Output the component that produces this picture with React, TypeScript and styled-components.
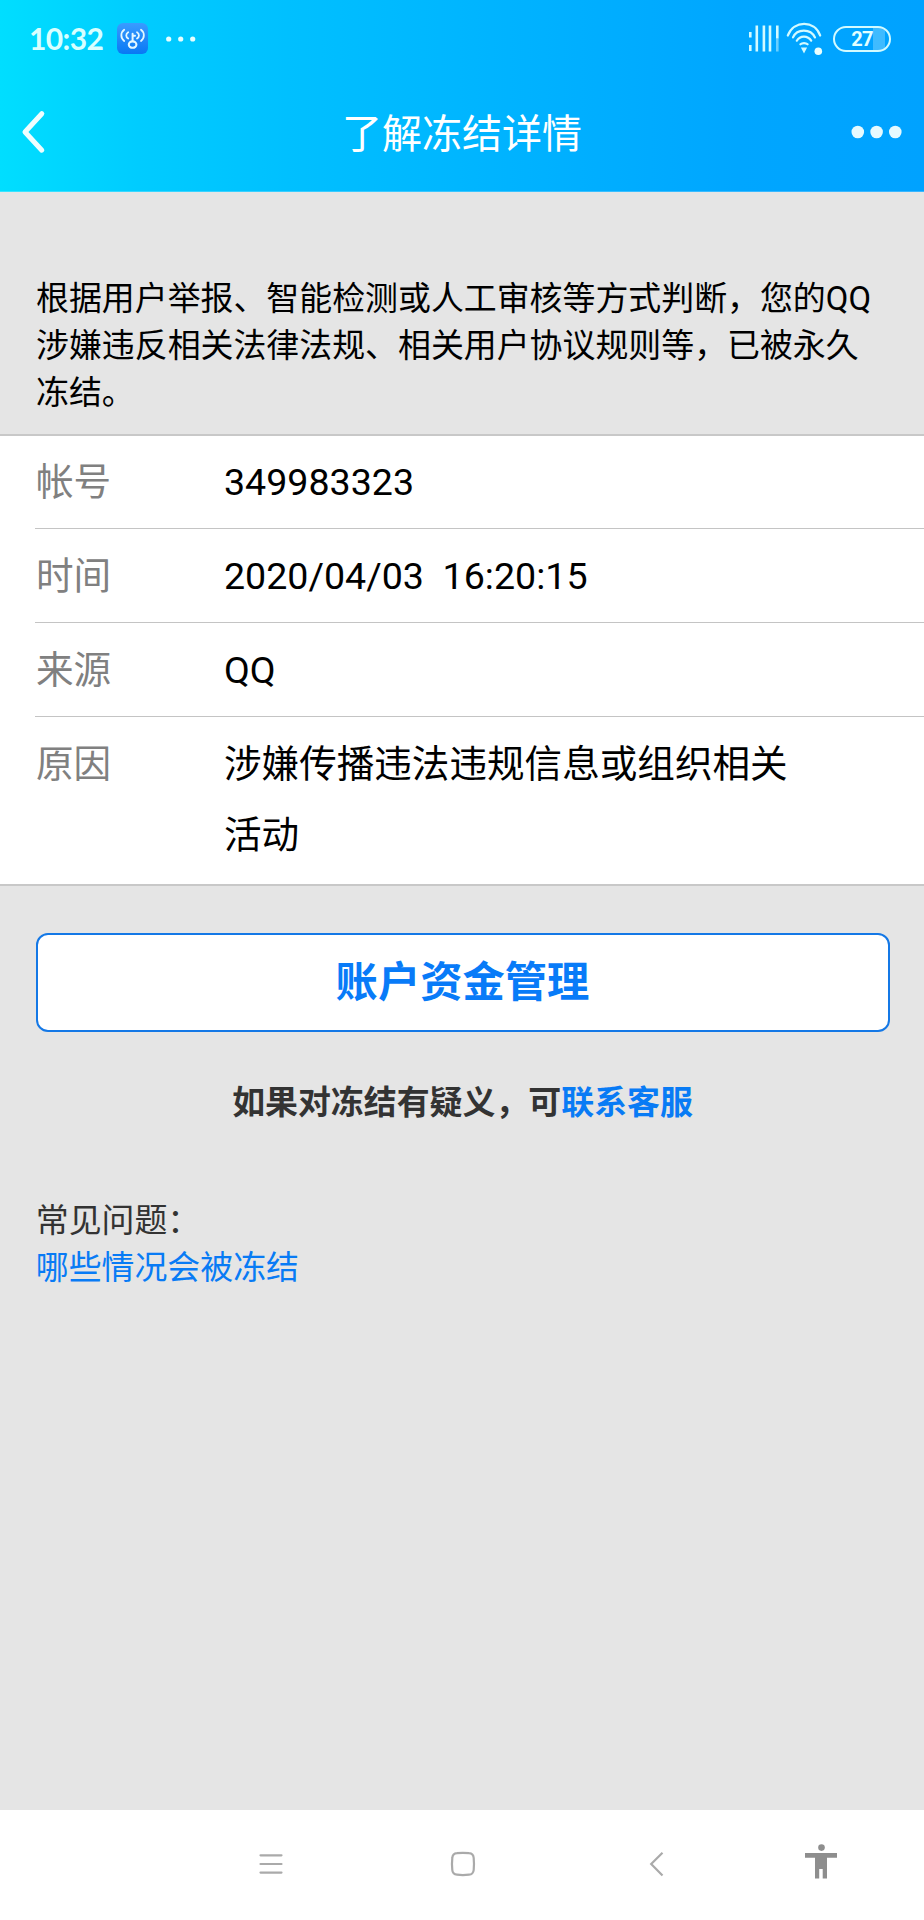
import React from "react";
import styled, { createGlobalStyle } from "styled-components";

const GlobalStyle = createGlobalStyle`
  * { box-sizing: border-box; }
  body {
    margin: 0;
    background: #e5e5e5;
    font-family: Roboto, "Noto Sans CJK SC", sans-serif;
  }
`;

const Screen = styled.div`
  width: 924px;
  height: 1920px;
  display: flex;
  flex-direction: column;
  background: #e5e5e5;
  overflow: hidden;
`;

const Header = styled.header`
  height: 192px;
  flex: none;
  border-bottom: 1px solid rgba(255, 255, 255, 0.22);
  background: linear-gradient(90deg, #00deff 0%, #00ccff 15%, #00c0ff 31%, #00b3ff 55%, #00a6ff 80%, #00a2ff 100%) border-box;
`;

const StatusBar = styled.div`
  height: 77px;
  display: flex;
  align-items: center;
  justify-content: space-between;
  padding: 0 33px 0 29px;
`;

const StatusGroup = styled.div`
  display: flex;
  align-items: center;
`;

const Clock = styled.span`
  width: 88px;
  padding-bottom: 2px;
  font-family: Lato, sans-serif;
  font-weight: 700;
  font-size: 30px;
  line-height: 36px;
  letter-spacing: -0.6px;
  color: #d8ffff;
  white-space: nowrap;
`;

const StatusDots = styled.svg`
  margin-left: 18px;
`;

const AppBar = styled.div`
  height: 114px;
  display: grid;
  grid-template-columns: 120px 1fr 120px;
  align-items: center;
`;

const IconButton = styled.button<{ $end?: boolean }>`
  border: 0;
  padding: ${(p) => (p.$end ? "0 22px 4px 0" : "0 0 4px 21px")};
  height: 110px;
  background: none;
  display: flex;
  align-items: center;
  justify-content: ${(p) => (p.$end ? "flex-end" : "flex-start")};
`;

const Title = styled.h1`
  margin: 0;
  padding-top: 1px;
  font-weight: 400;
  font-size: 40px;
  line-height: 60px;
  text-align: center;
  color: #fff;
`;

const Content = styled.main`
  flex: 1;
  display: flex;
  flex-direction: column;
`;

const Intro = styled.p`
  margin: 0;
  padding: 83px 34px 18px 36px;
  height: 242px;
  font-size: 32.92px;
  line-height: 47px;
  color: #000;
  white-space: nowrap;
`;

const Details = styled.dl`
  margin: 0;
  border-top: 2px solid #c8c8c8;
  border-bottom: 2px solid #c8c8c8;
  background: #fff;
  padding-left: 35.3px;
`;

const Row = styled.div<{ $first?: boolean; $last?: boolean }>`
  display: flex;
  height: ${(p) => (p.$last ? 167 : p.$first ? 93 : 94)}px;
  padding-top: ${(p) => (p.$first ? 11 : 12)}px;
  padding-left: 0.7px;
  border-bottom: ${(p) => (p.$last ? "none" : "1px solid #c4c4c4")};
  font-size: 37.6px;
  line-height: 70.5px;
`;

const Label = styled.dt`
  width: 188px;
  flex: none;
  color: #808080;
`;

const Value = styled.dd`
  margin: 0;
  width: 580px;
  color: #000;
  white-space: pre-wrap;
`;

const FundsButton = styled.button`
  margin: 47px 34.5px 0 35.5px;
  height: 99px;
  flex: none;
  padding: 1px 0 0;
  border: 2px solid #1478e6;
  border-radius: 12px;
  background: #fff;
  color: #087bf8;
  font-family: inherit;
  font-weight: 700;
  font-size: 42.3px;
  line-height: 60px;
`;

const Appeal = styled.p`
  margin: 47px 0 0;
  padding-left: 1px;
  text-align: center;
  font-weight: 700;
  font-size: 32.92px;
  line-height: 47px;
  color: #333;
`;

const Link = styled.a`
  color: #087bf5;
  text-decoration: none;
`;

const Faq = styled.section`
  margin-top: 71px;
  padding-left: 35.8px;
  display: flex;
  flex-direction: column;
  font-size: 32.9px;
  line-height: 47px;
  color: #333;
`;

const NavBar = styled.nav`
  height: 110.5px;
  flex: none;
  background: #fff;
  display: flex;
  align-items: center;
  padding: 0 87px 2px 259px;
`;

const NavItem = styled.svg<{ $gap?: number }>`
  flex: none;
  margin-left: ${(p) => p.$gap ?? 0}px;
`;

const PersonItem = styled(NavItem)`
  margin-bottom: 5px;
`;

const rows = [
  { label: "帐号", value: "349983323" },
  { label: "时间", value: "2020/04/03  16:20:15" },
  { label: "来源", value: "QQ" },
  { label: "原因", value: "涉嫌传播违法违规信息或组织相关活动" },
];

const HotspotIcon = () => (
  <svg width="31" height="31" viewBox="0 0 31 31" fill="none">
    <defs>
      <linearGradient id="hotspot" x1="0" y1="0" x2="0" y2="1">
        <stop offset="0" stopColor="#3a9bff" />
        <stop offset="1" stopColor="#0878f4" />
      </linearGradient>
    </defs>
    <rect width="31" height="31" rx="6" fill="url(#hotspot)" />
    <g stroke="#e4f8ff" strokeWidth="1.8" strokeLinecap="round">
      <path d="M7.2 6.8C3.4 9.5 3.4 15.2 7.2 18" />
      <path d="M11.2 9.2C8.6 10.8 8.6 14 11.2 15.6" />
      <path d="M24 6.8C27.8 9.5 27.8 15.2 24 18" />
      <path d="M20 9.2C22.6 10.8 22.6 14 20 15.6" />
      <path d="M15.6 18V10.8M15.6 12.8H18" strokeWidth="2" />
      <ellipse cx="15.6" cy="21.6" rx="3.8" ry="3.2" strokeWidth="2.1" />
    </g>
  </svg>
);

const SignalIcon = () => (
  <svg width="32" height="27" viewBox="0 0 32 27" stroke="#d2faff" strokeWidth="2.6">
    <path d="M2.3 7v5.5M2.3 20v6M8.8 .5v26M15.9 .5v26M22 .5v26M29.3 .5v13" />
    <path d="M29.3 13.5v13" opacity=".5" />
  </svg>
);

const WifiIcon = () => (
  <svg width="37" height="34" viewBox="0 0 37 34" fill="none" stroke="#d2faff" strokeWidth="2.2" strokeLinecap="round">
    <path d="M1.8 13.5C8 -2.1 28.4 -2.1 34.2 13.5" />
    <path d="M7 15.4C11 6.4 24.6 6.4 29 15.4" />
    <path d="M10.8 18.7C14 13.2 21.8 13.2 25.2 18.7" />
    <path d="M14.4 22.3C16.2 20.6 19.8 20.6 21.6 22.3" />
    <path d="M16.7 26.5h2.6L18 29Z" fill="#d2faff" />
    <circle cx="32.3" cy="29.3" r="3.8" fill="#eaffff" stroke="none" />
  </svg>
);

const SignalSlot = styled.span`
  display: flex;
  margin-right: 6px;
`;

const Battery = styled.div`
  width: 58px;
  height: 26px;
  margin-left: 10px;
  border: 2.5px solid #d2faff;
  border-radius: 13px;
  display: flex;
  align-items: center;
  justify-content: center;
  background: linear-gradient(90deg, transparent 38px, rgba(150, 220, 255, 0.42) 38px, rgba(150, 220, 255, 0.42) 50px, transparent 50px);
  font: 700 20px/22px Roboto, sans-serif;
  letter-spacing: -0.8px;
  color: #e2ffff;
`;

export default function App() {
  return (
    <>
      <GlobalStyle />
      <Screen>
        <Header>
          <StatusBar>
            <StatusGroup>
              <Clock>10:32</Clock>
              <HotspotIcon />
              <StatusDots width="30" height="6" viewBox="0 0 30 6" fill="#e6ffff">
                <circle cx="2.7" cy="3" r="2.6" />
                <circle cx="14.7" cy="3" r="2.6" />
                <circle cx="26.7" cy="3" r="2.6" />
              </StatusDots>
            </StatusGroup>
            <StatusGroup>
              <SignalSlot>
                <SignalIcon />
              </SignalSlot>
              <WifiIcon />
              <Battery>27</Battery>
            </StatusGroup>
          </StatusBar>
          <AppBar>
            <IconButton aria-label="返回">
              <svg width="26" height="44" viewBox="0 0 26 44" fill="none" stroke="#effeff" strokeWidth="5" strokeLinecap="round" strokeLinejoin="round">
                <path d="M20.8 3.7L4 22L20.8 40.2" />
              </svg>
            </IconButton>
            <Title>了解冻结详情</Title>
            <IconButton $end aria-label="更多">
              <svg width="52" height="14" viewBox="0 0 52 14" fill="#e6faff">
                <circle cx="7.8" cy="7" r="6.3" />
                <circle cx="26.6" cy="7" r="6.3" />
                <circle cx="45.3" cy="7" r="6.3" />
              </svg>
            </IconButton>
          </AppBar>
        </Header>
        <Content>
          <Intro>
            根据用户举报、智能检测或人工审核等方式判断，您的QQ
            <br />
            涉嫌违反相关法律法规、相关用户协议规则等，已被永久
            <br />
            冻结。
          </Intro>
          <Details>
            {rows.map((row, i) => (
              <Row key={row.label} $first={i === 0} $last={i === rows.length - 1}>
                <Label>{row.label}</Label>
                <Value>{row.value}</Value>
              </Row>
            ))}
          </Details>
          <FundsButton>账户资金管理</FundsButton>
          <Appeal>
            如果对冻结有疑义，可<Link>联系客服</Link>
          </Appeal>
          <Faq>
            <span>常见问题：</span>
            <Link>哪些情况会被冻结</Link>
          </Faq>
        </Content>
        <NavBar>
          <NavItem width="24" height="24" viewBox="0 0 24 24" stroke="#aaa" strokeWidth="2.2" strokeLinecap="round">
            <path d="M1.5 3.3h21M1.5 12h21M1.5 20.6h21" />
          </NavItem>
          <NavItem $gap={167} width="26" height="26" viewBox="0 0 26 26" fill="none" stroke="#aaa" strokeWidth="2.2">
            <path d="M7 2.2Q12.8 1.4 19 2.2Q23.4 2.6 23.7 7Q24.3 13 23.7 19Q23.2 23.4 19 23.7Q12.8 24.4 7 23.7Q2.6 23.3 2.3 19Q1.6 13 2.3 7Q2.6 2.6 7 2.2Z" />
          </NavItem>
          <NavItem $gap={173} width="16" height="26" viewBox="0 0 16 26" fill="none" stroke="#aaa" strokeWidth="2.2">
            <path d="M13.5 1.8L2.2 13L13.5 24.4" />
          </NavItem>
          <PersonItem $gap={140} width="32" height="36" viewBox="0 0 32 36" fill="#8e8e8e">
            <circle cx="16.5" cy="4.6" r="3.3" />
            <path d="M0 10h32v4.7H22V35.6h-4.3V26H14.2V35.6H10V14.7H0Z" />
          </PersonItem>
        </NavBar>
      </Screen>
    </>
  );
}
